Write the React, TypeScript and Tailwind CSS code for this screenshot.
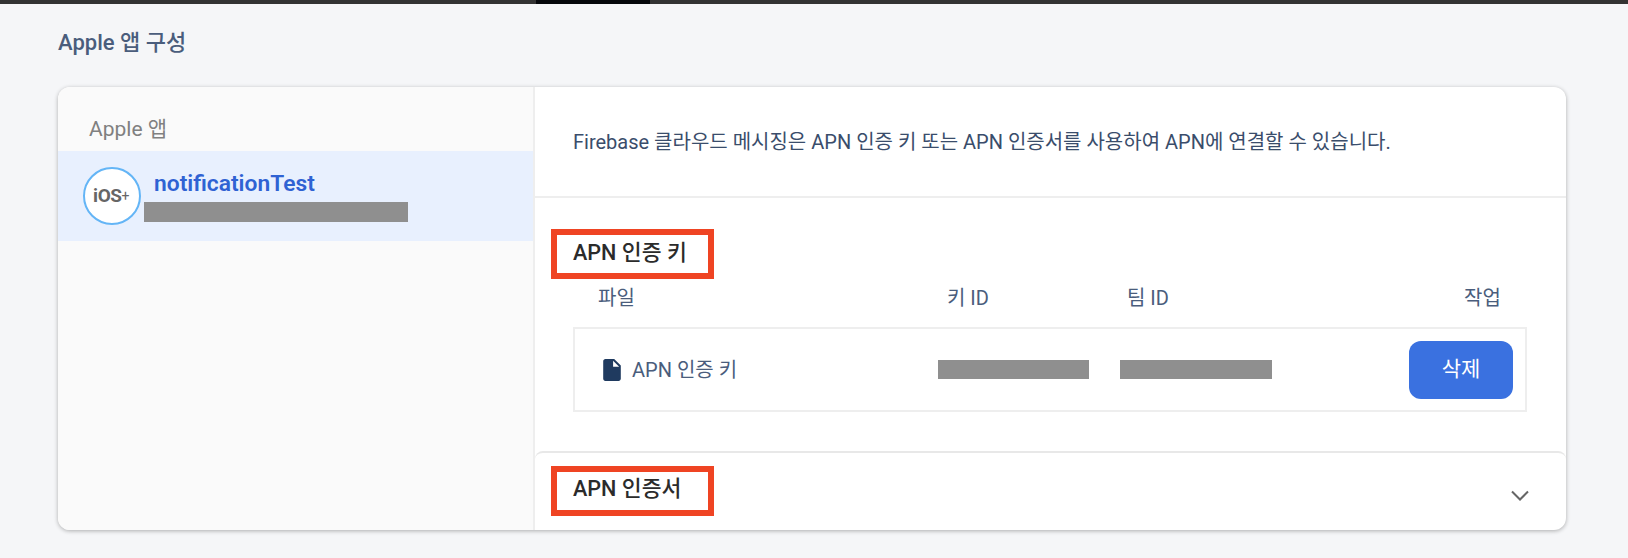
import React from "react";

function RedBox({ children, className }: { children: React.ReactNode; className: string }) {
  return (
    <div className={`ml-[16px] flex h-[50px] w-[163px] items-center border-[6px] border-[#ef4423] pl-[16px] text-[21.6px] font-medium text-[#2b2b2b] ${className}`}>
      {children}
    </div>
  );
}

function Redacted({ className }: { className: string }) {
  return <div className={`bg-[#8f8f8f] ${className}`} />;
}

export default function App() {
  return (
    <div className="h-[558px] w-[1628px] overflow-hidden bg-[#f5f6f8] font-['Roboto','Noto_Sans_CJK_KR',sans-serif]">
      <div className="flex h-[4px]">
        <div className="w-[536px] bg-[#333333]" />
        <div className="w-[114px] bg-[#05070b]" />
        <div className="flex-1 bg-[#333333]" />
      </div>
      <div className="px-[58px]">
        <div className="mb-[7px] flex h-[76px] items-center text-[22px] font-medium text-[#4a5d7c]">
          Apple 앱 구성
        </div>
        <div className="flex h-[443px] w-[1508px] overflow-hidden rounded-xl bg-white shadow-[0_1px_4px_rgba(0,0,0,0.3)]">
          <aside className="w-[477px] shrink-0 border-r-2 border-[#eeeeee] bg-[#fafafa]">
            <div className="flex h-[64px] items-center pt-[22px] pl-[31px] text-[21px] text-[#808080]">
              Apple 앱
            </div>
            <div className="flex h-[90px] items-start bg-[#e8f0fe] pl-[25px]">
              <div className="mt-[16px] flex h-[58px] w-[58px] shrink-0 items-center justify-center rounded-full border-2 border-[#64b5f6] bg-white pr-[2px] text-[19px] font-bold tracking-[-0.5px] text-[#666666]">
                iOS<span className="text-[14px] font-normal">+</span>
              </div>
              <div className="ml-[3px] pt-[21px]">
                <div className="pl-[10px] text-[22.8px] leading-[24px] font-semibold text-[#2f62d3]">notificationTest</div>
                <Redacted className="mt-[6px] h-[20px] w-[264px]" />
              </div>
            </div>
          </aside>
          <main className="flex min-w-0 flex-1 flex-col">
            <div className="flex h-[111px] shrink-0 items-center border-b-2 border-[#eeeeee] pl-[38px] text-[20px] text-[#3a4d6b]">
              Firebase 클라우드 메시징은 APN 인증 키 또는 APN 인증서를 사용하여 APN에 연결할 수 있습니다.
            </div>
            <div className="flex-1 pt-[31px]">
              <RedBox className="pb-[2px]">APN 인증 키</RedBox>
              <div className="flex h-[48px] items-center pb-[10px] pl-[63px] text-[20px] text-[#4a5d7c]">
                <div className="w-[349px]">파일</div>
                <div className="w-[180px]">키 ID</div>
                <div className="w-[337px]">팀 ID</div>
                <div>작업</div>
              </div>
              <div className="ml-[38px] flex h-[85px] w-[954px] items-center border-2 border-[#eeeeee] pl-[28px]">
                <div className="flex w-[335px] items-center gap-[11px] text-[20px] text-[#4a5d7c]">
                  <svg width="18" height="22" viewBox="4 2 16 20" fill="#1f3a5f">
                    <path d="M6 2c-1.1 0-1.99.9-1.99 2L4 20c0 1.1.89 2 1.99 2H18c1.1 0 2-.9 2-2V8l-6-6H6zm7 7V3.5L18.5 9H13z" />
                  </svg>
                  APN 인증 키
                </div>
                <Redacted className="h-[19px] w-[151px]" />
                <Redacted className="ml-[31px] h-[19px] w-[152px]" />
                <button className="mr-[12px] ml-auto h-[58px] w-[104px] rounded-xl bg-[#3a71e0] text-[21px] text-white">
                  삭제
                </button>
              </div>
            </div>
            <div className="flex h-[79px] shrink-0 items-start rounded-t-lg border-t-2 border-[#e8e8e8] pt-[13px]">
              <RedBox className="pb-[4px]">APN 인증서</RedBox>
              <svg className="mt-[18px] mr-[34px] ml-auto" width="24" height="24" viewBox="0 0 24 24" fill="none" stroke="#666666" strokeWidth="2">
                <path d="M4 7.5 12 15.5 20 7.5" />
              </svg>
            </div>
          </main>
        </div>
      </div>
    </div>
  );
}
